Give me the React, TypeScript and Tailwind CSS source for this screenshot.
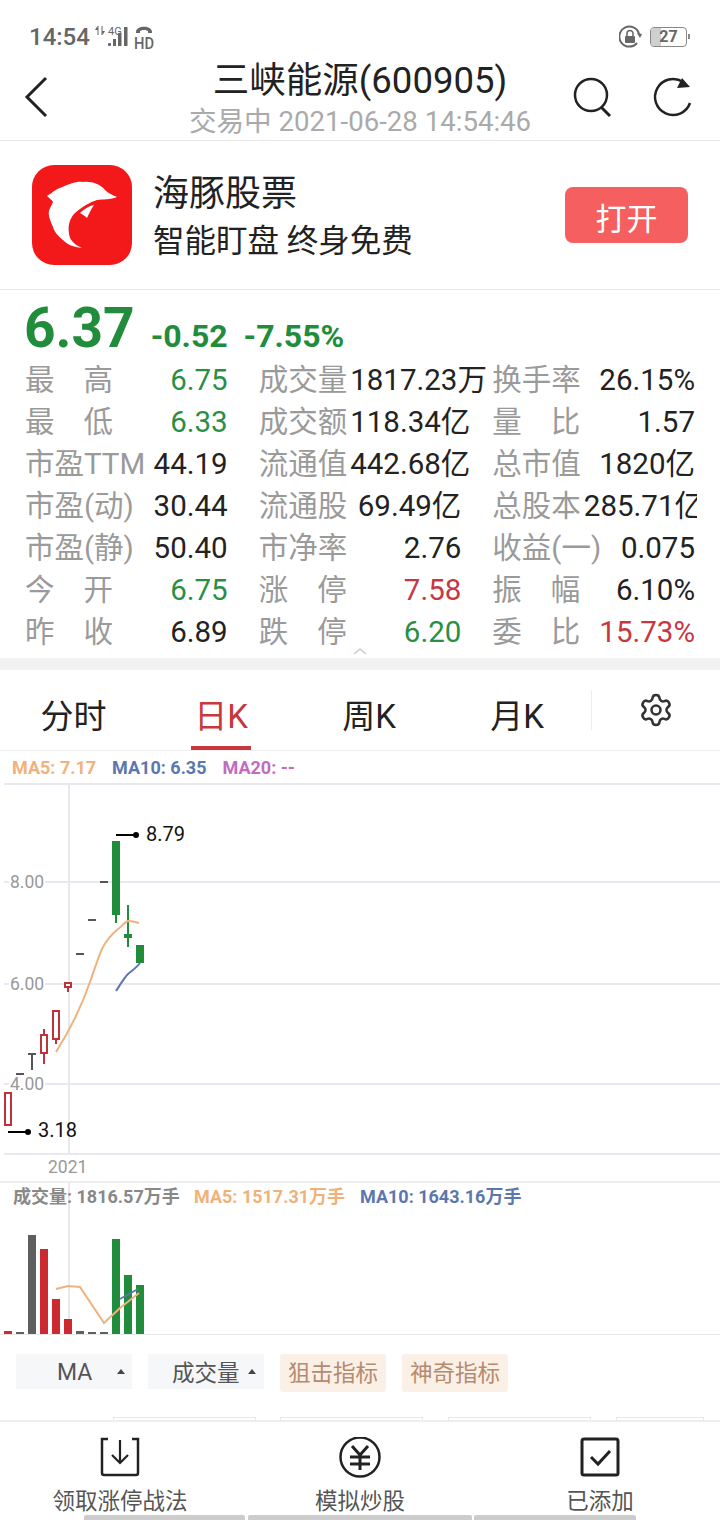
import React from 'react'
import { Settings } from 'lucide-react'

const GREEN = '#218c3c'
const RED = '#c0323a'

type Cell = { label: string; value: string; color?: string; spaced?: boolean }

const rows: Cell[][] = [
  [
    { label: '最高', value: '6.75', color: 'text-[#2a8f45]', spaced: true },
    { label: '成交量', value: '1817.23万' },
    { label: '换手率', value: '26.15%' },
  ],
  [
    { label: '最低', value: '6.33', color: 'text-[#2a8f45]', spaced: true },
    { label: '成交额', value: '118.34亿' },
    { label: '量比', value: '1.57', spaced: true },
  ],
  [
    { label: '市盈TTM', value: '44.19' },
    { label: '流通值', value: '442.68亿' },
    { label: '总市值', value: '1820亿' },
  ],
  [
    { label: '市盈(动)', value: '30.44' },
    { label: '流通股', value: '69.49亿' },
    { label: '总股本', value: '285.71亿' },
  ],
  [
    { label: '市盈(静)', value: '50.40' },
    { label: '市净率', value: '2.76' },
    { label: '收益(一)', value: '0.075' },
  ],
  [
    { label: '今开', value: '6.75', color: 'text-[#2a8f45]', spaced: true },
    { label: '涨停', value: '7.58', color: 'text-[#c8373f]', spaced: true },
    { label: '振幅', value: '6.10%', spaced: true },
  ],
  [
    { label: '昨收', value: '6.89', spaced: true },
    { label: '跌停', value: '6.20', color: 'text-[#2a8f45]', spaced: true },
    { label: '委比', value: '15.73%', color: 'text-[#c8373f]', spaced: true },
  ],
]

const Stat: React.FC<{ cell: Cell }> = ({ cell }) => (
  <div className="flex justify-between items-center h-[42px] whitespace-nowrap">
    {cell.spaced ? (
      <span className="flex justify-between w-[88px] shrink-0 text-[#9a9a9a]">
        <span>{cell.label[0]}</span>
        <span>{cell.label[1]}</span>
      </span>
    ) : (
      <span className="shrink-0 text-[#9a9a9a]">{cell.label}</span>
    )}
    <span className={`ml-[3px] ${cell.color ?? 'text-[#222222]'}`}>{cell.value}</span>
  </div>
)

const StatusBar = () => (
  <div className="flex justify-between items-center h-[56px] pt-[18px] pl-[29px] pr-[30px] text-[#666666]">
    <div className="flex items-center">
      <span className="text-[24px] font-medium leading-none">14:54</span>
      <svg width="68" height="34" viewBox="0 -3 68 34" className="ml-[3px]">
        <path d="M5 3v9M9 3v9" stroke="#666" strokeWidth="1" />
        <path d="M4.5 3 2 7h3zM9.5 12 12 8H9z" fill="#666" />
        <text x="15" y="12" fontSize="11" fill="#666" fontFamily="Roboto">4G</text>
        <rect x="15" y="20" width="3" height="3" rx="1" fill="#666" />
        <rect x="20" y="16" width="3" height="7" fill="#666" />
        <rect x="25" y="10" width="3.5" height="13" fill="#666" />
        <rect x="31" y="4" width="3.5" height="19" fill="#666" />
        <path d="M43 9c0-7 16-7 16 0v1h-4V8c-2-1.500-6-1.500-8 0v2h-4z" fill="#666" />
        <text x="41" y="26" fontSize="16" fill="#666" fontFamily="Roboto" fontWeight="500" textLength="20" lengthAdjust="spacingAndGlyphs">HD</text>
      </svg>
    </div>
    <div className="flex items-center gap-[8px]">
      <svg width="23" height="24" viewBox="0 0 23 24">
        <path d="M18 18A10 10 0 1 1 20 9" fill="none" stroke="#666" strokeWidth="2" />
        <path d="M21 13l-3-5 5 1z" fill="#666" />
        <rect x="6" y="11" width="10" height="7" rx="1" fill="#666" />
        <path d="M8 11V8.500a3 3 0 0 1 6 0V11" fill="none" stroke="#666" strokeWidth="1.500" />
      </svg>
      <div className="flex items-center">
        <div className="relative flex justify-center items-center w-[37px] h-[20px] border border-[#888888] rounded-[4px] overflow-hidden">
          <div className="absolute left-0 top-0 bottom-0 w-[10px] bg-[#cfcfcf]" />
          <span className="relative text-[16px] font-bold leading-none">27</span>
        </div>
        <div className="w-[2px] h-[5px] ml-[1px] bg-[#888888]" />
      </div>
    </div>
  </div>
)

const Header = () => (
  <div className="relative flex flex-col items-center h-[85px] border-b border-[#e6e6e6]">
    <div className="absolute left-0 top-0">
      <svg width="720" height="84" viewBox="0 56 720 84">
        <path d="M46 78 27 97l19 19" fill="none" stroke="#222" strokeWidth="3" />
        <circle cx="591" cy="95" r="16" fill="none" stroke="#222" strokeWidth="2.500" />
        <path d="M601 107l9 9" stroke="#222" strokeWidth="3" />
        <path d="M690 103A18 18 0 1 1 683 82" fill="none" stroke="#222" strokeWidth="2.500" />
        <path d="M690 87 677 88l5-10z" fill="#222" />
      </svg>
    </div>
    <div className="text-[36.500px] leading-[50px] text-[#222222]">三峡能源(600905)</div>
    <div className="text-[27.600px] leading-[30px] mt-[1px] text-[#aaaaaa]">交易中 2021-06-28 14:54:46</div>
  </div>
)

const AdBanner = () => (
  <div className="flex items-center h-[149px] pl-[32px] pr-[32px] border-b border-[#eaeaea]">
    <div className="w-[100px] h-[100px] rounded-[22px] bg-[#f3181a] shrink-0">
      <svg width="100" height="100" viewBox="0 0 100 100">
        <path
          d="M15 31C20 28 24 24 28 23C37 19 45 16 51 17C60 16 68 19 73 25C77 29 81 30 85 32C78 35 71 34 65 35C58 37 50 42 43 48C37 54 35 62 38 73C41 78 45 81 50 83C41 82 36 80 31 75C25 70 22 66 21 62C18 55 16 50 17 46C18 42 20 40 21 37C19 34 17 33 15 31Z"
          fill="#fff"
        />
        <path d="M48 48C52 44 57 41 62 40C59 44 57 49 55 53C53 51 50 49 48 48Z" fill="#fff" />
      </svg>
    </div>
    <div className="flex flex-col ml-[21px] pt-[6px] text-[#222222]">
      <span className="text-[36px] leading-[48px]">海豚股票</span>
      <span className="text-[31.500px] leading-[48px]">智能盯盘 终身免费</span>
    </div>
    <div className="flex justify-center items-center ml-auto w-[123px] h-[56px] pt-[10px] rounded-[8px] bg-[#f55f60] text-[31px] text-white">打开</div>
  </div>
)

const Quote = () => (
  <div className="relative h-[369px] pt-[7px]">
    <div className="flex items-baseline h-[62px] pl-[24px] text-[#218c3c] font-bold">
      <span className="text-[55px] leading-[62px]">6.37</span>
      <span className="ml-[16px] text-[32px]">-0.52</span>
      <span className="ml-[16px] text-[32px]">-7.55%</span>
    </div>
    <div className="grid grid-cols-3 gap-x-[31px] w-[697px] overflow-hidden pl-[25px] pr-[2px] text-[29.500px]">
      {rows.flat().map((cell) => (
        <Stat key={cell.label + cell.value} cell={cell} />
      ))}
    </div>
    <svg width="14" height="8" viewBox="0 0 14 8" className="absolute left-[353px] top-[357px]">
      <path d="M1 7l6-5 6 5" fill="none" stroke="#cccccc" strokeWidth="1.500" />
    </svg>
  </div>
)

const Tabs = () => (
  <div className="flex items-stretch h-[81px] border-b border-[#eeeeee] text-[33px] text-[#222222]">
    <div className="flex justify-center items-center w-[147px] pt-[14px]">分时</div>
    <div className="relative flex justify-center items-center w-[148px] pt-[14px] text-[#c8373b]">
      日K
      <div className="absolute left-[44px] bottom-0 w-[60px] h-[4px] bg-[#c8373b]" />
    </div>
    <div className="flex justify-center items-center w-[148px] pt-[14px]">周K</div>
    <div className="flex justify-center items-center w-[148px] pt-[14px]">月K</div>
    <div className="w-[1px] h-[40px] mt-[20px] mr-[46px] bg-[#eeeeee]" />
    <div className="flex items-center">
      <Settings size={36} strokeWidth={1.7} color="#333333" />
    </div>
  </div>
)

const priceChart = (
  <svg width="720" height="398" viewBox="0 783 720 398" className="block">
    <g stroke="#e8e9f0" strokeWidth="2">
      <path d="M4 784H720" />
      <path d="M69 784V1154" />
      <path d="M4 882H720M4 984H720M4 1084H720M4 1154H720" />
    </g>
    <g fontFamily="Roboto" fontSize="17.500" fill="#999999">
      <rect x="9" y="872" width="36" height="20" fill="#ffffff" />
      <rect x="9" y="974" width="36" height="20" fill="#ffffff" />
      <rect x="9" y="1074" width="36" height="20" fill="#ffffff" />
      <text x="10" y="888">8.00</text>
      <text x="10" y="990">6.00</text>
      <text x="10" y="1090">4.00</text>
      <text x="48" y="1173">2021</text>
    </g>
    {/* green days */}
    <g fill={GREEN}>
      <rect x="112" y="841" width="8" height="74" />
      <rect x="115" y="915" width="2" height="8" />
      <rect x="127" y="905" width="2" height="42" />
      <rect x="124" y="934" width="8" height="4" />
      <rect x="136" y="945" width="8" height="18" />
    </g>
    {/* flat days */}
    <g fill="#555555">
      <rect x="100" y="881" width="8" height="2" />
      <rect x="88" y="919" width="8" height="2" />
      <rect x="76" y="953" width="8" height="2" />
      <rect x="28" y="1053" width="8" height="2" />
      <rect x="31" y="1053" width="2" height="17" />
      <rect x="16" y="1073" width="8" height="2" />
    </g>
    {/* red days */}
    <g fill="#ffffff" stroke={RED} strokeWidth="2">
      <rect x="65" y="983" width="6" height="4" />
      <rect x="53" y="1011" width="6" height="28" />
      <rect x="41" y="1035" width="6" height="18" />
      <rect x="5" y="1093" width="6" height="32" />
      <path d="M68 987v5M56 1039v5M44 1029v5M44 1053v11" fill="none" />
    </g>
    <path
      d="M56 1052C70 1030 82 1005 90 982C96 965 100 952 103 947C108 938 112 934 117 930C121 927 125 922 128 921C132 921 136 922 139 923"
      fill="none"
      stroke="#efb27c"
      strokeWidth="2"
    />
    <path d="M116 991C120 985 124 978 128 974C133 970 137 967 140 963" fill="none" stroke="#5c77ad" strokeWidth="2" />
    <g stroke="#000000" strokeWidth="2">
      <path d="M116 835H136" />
      <path d="M8 1132H28" />
    </g>
    <circle cx="136" cy="835" r="3" fill="#000000" />
    <circle cx="28" cy="1132" r="3" fill="#000000" />
    <g fontFamily="Roboto" fontSize="20" fill="#111111">
      <text x="146" y="841">8.79</text>
      <text x="38" y="1137">3.18</text>
    </g>
  </svg>
)

const volumeChart = (
  <svg width="720" height="125" viewBox="0 1209 720 125" className="block">
    <path d="M69 1209V1334" stroke="#e8e9f0" strokeWidth="2" />
    <g fill="#cc2a2e">
      <rect x="4" y="1331" width="8" height="4" />
      <rect x="40" y="1249" width="8" height="86" />
      <rect x="52" y="1299" width="8" height="36" />
      <rect x="64" y="1319" width="8" height="16" />
    </g>
    <g fill="#5f5f5f">
      <rect x="16" y="1332" width="8" height="2" />
      <rect x="28" y="1235" width="8" height="100" />
      <rect x="76" y="1331" width="8" height="4" />
      <rect x="88" y="1332" width="8" height="2" />
      <rect x="100" y="1332" width="8" height="2" />
    </g>
    <g fill={GREEN}>
      <rect x="112" y="1239" width="8" height="96" />
      <rect x="124" y="1275" width="8" height="60" />
      <rect x="136" y="1285" width="8" height="50" />
    </g>
    <path d="M56 1289 68 1286 80 1287 104 1323 120 1308 139 1293" fill="none" stroke="#efb27c" strokeWidth="2" />
    <path d="M120 1299 138 1289" fill="none" stroke="#5c77ad" strokeWidth="2" />
  </svg>
)

const Charts = () => (
  <div className="relative h-[583px]">
    <div className="flex items-center gap-[16px] h-[32px] pl-[12px] text-[18px] font-bold">
      <span className="text-[#f0b27a]">MA5: 7.17</span>
      <span className="text-[#5c77ad]">MA10: 6.35</span>
      <span className="text-[#c36bc2]">MA20: --</span>
    </div>
    {priceChart}
    <div className="relative flex items-center h-[28px] pl-[13px] border-t-2 border-[#eeeeee] text-[18px] font-bold whitespace-nowrap">
      <div className="absolute left-[68px] top-0 bottom-0 w-[2px] bg-[#e8e9f0]" />
      <span className="relative w-[181px] text-[#888888]">成交量: 1816.57万手</span>
      <span className="w-[166px] text-[#f0b27a]">MA5: 1517.31万手</span>
      <span className="text-[#5c77ad]">MA10: 1643.16万手</span>
    </div>
    {volumeChart}
  </div>
)

const Caret = () => <span className="w-0 h-0 border-x-[4px] border-x-transparent border-b-[5px] border-b-[#444444]" />

const Indicators = () => (
  <div className="relative h-[86px] border-t border-[#e8e8e8]">
    <div className="flex items-start gap-[16px] pt-[19px] pl-[16px] text-[22.500px]">
      <div className="flex items-center w-[116px] h-[35px] pt-[4px] pl-[41px] bg-[#f6f7f9] text-[#555555] text-[23px]">
        MA
        <span className="flex ml-[25px] -mt-[4px]"><Caret /></span>
      </div>
      <div className="flex items-center w-[116px] h-[35px] pt-[4px] pl-[24px] bg-[#f6f7f9] text-[#555555]">
        成交量
        <span className="flex ml-[8px] -mt-[4px]"><Caret /></span>
      </div>
      <div className="flex justify-center items-center w-[106px] h-[38px] pt-[1px] rounded-[3px] bg-[#faf0e6] text-[#b58a6f]">狙击指标</div>
      <div className="flex justify-center items-center w-[106px] h-[38px] pt-[1px] rounded-[3px] bg-[#faf0e6] text-[#b58a6f]">神奇指标</div>
    </div>
    <div className="absolute left-[113px] bottom-0 w-[143px] h-[3px] border-t border-x border-[#e8e8e8]" />
    <div className="absolute left-[280px] bottom-0 w-[143px] h-[3px] border-t border-x border-[#e8e8e8]" />
    <div className="absolute left-[448px] bottom-0 w-[143px] h-[3px] border-t border-x border-[#e8e8e8]" />
    <div className="absolute left-[616px] bottom-0 w-[88px] h-[3px] border-t border-x border-[#e8e8e8]" />
  </div>
)

const NavItem: React.FC<{ label: string; children: React.ReactNode }> = ({ label, children }) => (
  <div className="flex flex-col items-center w-[240px] pt-[15px]">
    <div className="w-[40px] h-[40px]">{children}</div>
    <div className="mt-[9px] text-[22.500px] leading-[30px] text-[#555555] whitespace-nowrap">{label}</div>
  </div>
)

const BottomNav = () => (
  <div className="relative flex justify-center h-[100px] border-t-2 border-[#eeeeee] bg-white">
    <NavItem label="领取涨停战法">
      <svg width="40" height="40" viewBox="0 0 40 40" fill="none" stroke="#222" strokeWidth="2.500">
        <path d="M8 2H2v34a2 2 0 0 0 2 2h32a2 2 0 0 0 2-2V2h-6" />
        <path d="M20 3v22M12 18l8 8 8-8" strokeWidth="2.200" />
      </svg>
    </NavItem>
    <NavItem label="模拟炒股">
      <svg width="44" height="44" viewBox="0 0 44 44" className="-ml-[2px]" fill="none" stroke="#222" strokeWidth="2.500">
        <circle cx="22" cy="20" r="19.500" />
        <path d="M14 9l8 9 8-9M12 20h20M12 27h20M22 18v15" strokeWidth="3" />
      </svg>
    </NavItem>
    <NavItem label="已添加">
      <svg width="40" height="40" viewBox="0 0 40 40" fill="none" stroke="#222" strokeWidth="3">
        <rect x="2" y="2" width="36" height="36" rx="2" />
        <path d="M11 20l7 7 12-13" />
      </svg>
    </NavItem>
    <div className="absolute left-[84px] bottom-0 w-[161px] h-[5px] rounded-t-[2px] bg-[#cccccc]" />
    <div className="absolute left-[248px] bottom-0 w-[224px] h-[5px] rounded-t-[2px] bg-[#cccccc]" />
    <div className="absolute left-[474px] bottom-0 w-[162px] h-[5px] rounded-t-[2px] bg-[#cccccc]" />
  </div>
)

const App: React.FC = () => {
  return (
    <div className="flex flex-col w-[720px] h-[1520px] overflow-hidden bg-white font-['Roboto','Noto_Sans_CJK_SC',sans-serif]">
      <StatusBar />
      <Header />
      <AdBanner />
      <Quote />
      <div className="h-[12px] bg-[#f2f2f2]" />
      <Tabs />
      <Charts />
      <Indicators />
      <BottomNav />
    </div>
  )
}

export default App
